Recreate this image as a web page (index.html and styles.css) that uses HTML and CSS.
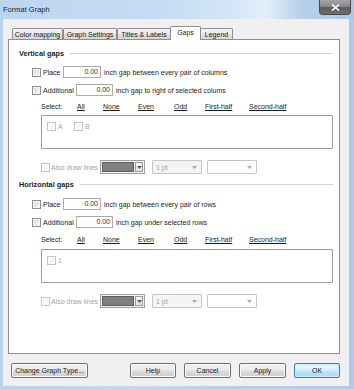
FILE: index.html
```html
<!DOCTYPE html>
<html>
<head>
<meta charset="utf-8">
<link rel="stylesheet" href="styles.css">
</head>
<body>
<div class="window">
  <div class="titlebar">
    <span class="title">Format Graph</span>
    <div class="close"><svg width="9" height="7" viewBox="0 0 9 7"><path d="M1 0.5 L8 6.5 M8 0.5 L1 6.5" stroke="#fff" stroke-width="1.6"/></svg></div>
  </div>
  <div class="client">
    <div class="tabs">
      <div class="tab w51">Color mapping</div>
      <div class="tab w54">Graph Settings</div>
      <div class="tab w54">Titles &amp; Labels</div>
      <div class="tab selected">Gaps</div>
      <div class="tab w33">Legend</div>
    </div>
    <div class="panel">
      <div class="heading h-v"><span>Vertical gaps</span><div class="rule"></div></div>
      <div class="row r-place1">
        <span class="cb"></span><span class="lbl lbl-place">Place</span>
        <span class="num num-place">0.00</span><span class="txt">inch gap between every pair of columns</span>
      </div>
      <div class="row r-add">
        <span class="cb"></span><span class="lbl lbl-add">Additional</span>
        <span class="num num-add">0.00</span><span class="txt">inch gap to right of selected colums</span>
      </div>
      <div class="select s-first">
        <span class="sel w36">Select:</span>
        <span class="link w26">All</span>
        <span class="link w35">None</span>
        <span class="link w36">Even</span>
        <span class="link w31">Odd</span>
        <span class="link w44">First-half</span>
        <span class="link">Second-half</span>
      </div>
      <div class="list">
        <span class="item w27"><span class="cb dis"></span><span class="dtxt">A</span></span>
        <span class="item"><span class="cb dis"></span><span class="dtxt">B</span></span>
      </div>
      <div class="draw d-first">
        <span class="cb dis"></span><span class="dtxt drawlbl">Also draw lines</span>
        <span class="colorcombo"><span class="swatch"></span><span class="cbtn"><svg width="5" height="3" viewBox="0 0 5 3"><path d="M0 0 L5 0 L2.5 3Z" fill="#555"/></svg></span></span>
        <span class="combo c-pt"><span class="dtxt">1 pt</span><span class="arrow"><svg width="5" height="3" viewBox="0 0 5 3"><path d="M0 0 L5 0 L2.5 3Z" fill="#a8a8a8"/></svg></span></span>
        <span class="combo c-empty"><span class="arrow"><svg width="5" height="3" viewBox="0 0 5 3"><path d="M0 0 L5 0 L2.5 3Z" fill="#a8a8a8"/></svg></span></span>
      </div>

      <div class="heading h-h"><span>Horizontal gaps</span><div class="rule"></div></div>
      <div class="row r-place2">
        <span class="cb"></span><span class="lbl lbl-place">Place</span>
        <span class="num num-place">0.00</span><span class="txt">inch gap between every pair of rows</span>
      </div>
      <div class="row r-add">
        <span class="cb"></span><span class="lbl lbl-add">Additional</span>
        <span class="num num-add">0.00</span><span class="txt">inch gap under selected rows</span>
      </div>
      <div class="select s-second">
        <span class="sel w36">Select:</span>
        <span class="link w26">All</span>
        <span class="link w35">None</span>
        <span class="link w36">Even</span>
        <span class="link w31">Odd</span>
        <span class="link w44">First-half</span>
        <span class="link">Second-half</span>
      </div>
      <div class="list l-second">
        <span class="item"><span class="cb dis"></span><span class="dtxt">1</span></span>
      </div>
      <div class="draw">
        <span class="cb dis"></span><span class="dtxt drawlbl">Also draw lines</span>
        <span class="colorcombo"><span class="swatch"></span><span class="cbtn"><svg width="5" height="3" viewBox="0 0 5 3"><path d="M0 0 L5 0 L2.5 3Z" fill="#555"/></svg></span></span>
        <span class="combo c-pt"><span class="dtxt">1 pt</span><span class="arrow"><svg width="5" height="3" viewBox="0 0 5 3"><path d="M0 0 L5 0 L2.5 3Z" fill="#a8a8a8"/></svg></span></span>
        <span class="combo c-empty"><span class="arrow"><svg width="5" height="3" viewBox="0 0 5 3"><path d="M0 0 L5 0 L2.5 3Z" fill="#a8a8a8"/></svg></span></span>
      </div>
    </div>
    <div class="buttons">
      <div class="btn b-change">Change Graph Type...</div>
      <div class="spacer"></div>
      <div class="btn b46">Help</div>
      <div class="btn b47">Cancel</div>
      <div class="btn b47">Apply</div>
      <div class="btn b46 default">OK</div>
    </div>
  </div>
</div>
</body>
</html>
```

FILE: styles.css
```css
html, body {
  margin: 0;
  padding: 0;
  background: #ffffff;
}
.window {
  width: 354px;
  height: 389px;
  box-sizing: border-box;
  background: linear-gradient(90deg, #b9d3ee 0%, #c3daf1 40%, #b5cfea 70%, #aecbe9 100%);
  font-family: "Liberation Sans", Arial, sans-serif;
  font-size: 7px;
  color: #1b1b1b;
  display: flex;
  flex-direction: column;
  overflow: hidden;
}
.titlebar {
  height: 19px;
  display: flex;
  align-items: flex-start;
  background: linear-gradient(90deg, #bcd5ee 0%, #c6dcf3 45%, #d3e5f7 65%, #e3eefa 75%, #b7d0ea 85%, #a9c8e8 100%);
}
.title {
  font-size: 7.5px;
  color: #1e1e1e;
  margin-left: 3px;
  margin-top: 5px;
  line-height: 9px;
}
.close {
  margin-left: auto;
  margin-right: 3px;
  width: 32px;
  height: 15px;
  box-sizing: border-box;
  border: 1px solid #4a4a4a;
  border-top: none;
  border-radius: 0 0 4px 4px;
  background: linear-gradient(180deg, #a5a5a5 0%, #8a8a8a 45%, #5e5e5e 55%, #6f6f6f 100%);
  display: flex;
  align-items: center;
  justify-content: center;
}
.client {
  margin-left: 3px;
  width: 346px;
  height: 367px;
  background: #f0f0f0;
  display: flex;
  flex-direction: column;
}
.tabs {
  height: 20px;
  margin-left: 9px;
  display: flex;
  align-items: flex-end;
}
.tab {
  height: 11px;
  box-sizing: border-box;
  border: 1px solid #8c8e94;
  border-bottom: none;
  border-radius: 2px 2px 0 0;
  background: linear-gradient(180deg, #f4f4f4 0%, #ececec 50%, #e0e0e0 51%, #d6d6d6 100%);
  display: flex;
  align-items: center;
  justify-content: center;
  line-height: 9px;
  white-space: nowrap;
}
.tab.w51 { width: 51px; }
.tab.w54 { width: 54px; }
.tab.w33 { width: 33px; }
.tab.selected {
  width: 31px;
  height: 14px;
  margin-left: -1px;
  margin-right: -1px;
  margin-bottom: -1px;
  background: #ffffff;
  position: relative;
  z-index: 2;
  padding-bottom: 2px;
}
.panel {
  margin-left: 5px;
  width: 332px;
  height: 315px;
  box-sizing: border-box;
  border: 1px solid #8c8e94;
  background: #ffffff;
  display: flex;
  flex-direction: column;
}
.heading {
  height: 10px;
  display: flex;
  align-items: center;
  padding-left: 10px;
  font-weight: bold;
  font-size: 7.3px;
}
.heading .rule {
  flex: 1;
  height: 1px;
  background: #d0d0d0;
  margin-left: 6px;
  margin-right: 6px;
}
.h-v { margin-top: 8px; }
.h-h { margin-top: 5px; }
.row {
  height: 12px;
  display: flex;
  align-items: center;
  padding-left: 23px;
}
.r-place1 { margin-top: 8px; }
.r-add { margin-top: 6px; }
.r-place2 { margin-top: 9px; }
.cb {
  width: 9px;
  height: 9px;
  box-sizing: border-box;
  border: 1px solid #8e8f8f;
  background: linear-gradient(135deg, #d8d8d8 0%, #ededed 60%, #f6f6f6 100%);
  box-shadow: inset 0 0 0 1px #f4f4f4;
  flex: none;
}
.cb.dis {
  border-color: #c4c4c4;
  background: #f7f7f7;
  box-shadow: inset 0 0 0 1px #ffffff;
}
.lbl {
  margin-left: 2px;
  white-space: nowrap;
}
.lbl-place { width: 20px; }
.lbl-add { width: 33px; }
.num {
  height: 12px;
  box-sizing: border-box;
  border: 1px solid #abadb3;
  border-top-color: #a3a6ad;
  border-radius: 1px;
  background: #ffffff;
  text-align: right;
  padding-right: 2px;
  line-height: 10px;
  color: #333333;
  flex: none;
}
.num-place { width: 38px; }
.num-add { width: 37px; }
.txt {
  margin-left: 3px;
  white-space: nowrap;
}
.select {
  height: 10px;
  display: flex;
  align-items: center;
  padding-left: 32px;
  white-space: nowrap;
}
.s-first { margin-top: 5px; }
.s-second { margin-top: 6px; }
.sel, .link { flex: none; }
.link { text-decoration: underline; }
.w26 { width: 26px; }
.w27 { width: 27px; }
.w31 { width: 31px; }
.w35 { width: 35px; }
.w36 { width: 36px; }
.w44 { width: 44px; }
.list {
  margin-top: 4px;
  margin-left: 32px;
  width: 292px;
  height: 34px;
  box-sizing: border-box;
  border: 1px solid #9b9b9b;
  border-radius: 1px;
  padding: 6px 0 0 5px;
  display: flex;
  align-items: flex-start;
}
.l-second { margin-top: 5px; }
.item {
  display: flex;
  align-items: center;
  height: 9px;
  flex: none;
}
.dtxt {
  color: #a3a3a3;
  margin-left: 2px;
  white-space: nowrap;
}
.draw {
  margin-top: 11px;
  height: 14px;
  display: flex;
  align-items: center;
  padding-left: 32px;
}
.drawlbl { width: 49px; margin-left: 1px; }
.colorcombo {
  width: 45px;
  height: 14px;
  box-sizing: border-box;
  border: 1px solid #a0a0a0;
  background: #f3f3f3;
  display: flex;
  align-items: stretch;
  padding: 1px;
  flex: none;
}
.swatch {
  flex: 1;
  background: #7f7f7f;
  border: 1px solid #5e5e5e;
}
.cbtn {
  width: 8px;
  margin-left: 1px;
  box-sizing: border-box;
  border: 1px solid #9a9a9a;
  background: linear-gradient(180deg, #f6f6f6 0%, #e2e2e2 100%);
  display: flex;
  align-items: center;
  justify-content: center;
}
.combo {
  height: 14px;
  box-sizing: border-box;
  border: 1px solid #c6c6c6;
  border-radius: 1px;
  display: flex;
  align-items: center;
  flex: none;
  padding-left: 1px;
}
.c-pt { width: 50px; margin-left: 7px; background: #f4f4f4; }
.c-empty { width: 50px; margin-left: 5px; background: #ffffff; }
.combo .arrow {
  margin-left: auto;
  margin-right: 4px;
  display: flex;
}
.buttons {
  margin-top: 9px;
  height: 15px;
  display: flex;
  padding-left: 8px;
  padding-right: 9px;
}
.spacer { flex: 1; }
.btn {
  height: 15px;
  box-sizing: border-box;
  border: 1px solid #707070;
  border-radius: 2px;
  background: linear-gradient(180deg, #f2f2f2 0%, #ebebeb 48%, #dddddd 52%, #cfcfcf 100%);
  box-shadow: inset 0 0 0 1px #fbfbfb;
  display: flex;
  align-items: center;
  justify-content: center;
  white-space: nowrap;
  flex: none;
  margin-left: 8px;
}
.b-change { width: 77px; margin-left: 0; }
.b46 { width: 46px; }
.b47 { width: 47px; }
.btn.default {
  border-color: #3c7fb1;
  background: linear-gradient(180deg, #eaf6fd 0%, #d9f0fc 48%, #bee6fd 52%, #a7d9f5 100%);
  box-shadow: inset 0 0 0 1px #c9eafc;
}
```
